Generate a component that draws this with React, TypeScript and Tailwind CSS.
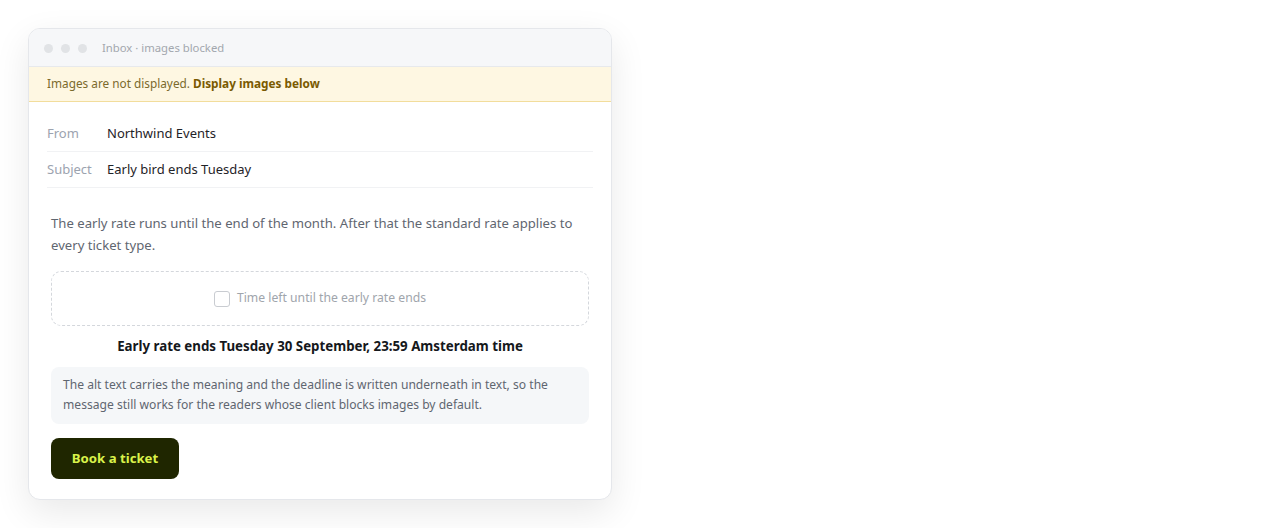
import React from "react";

export default function App() {
  return (
    <div
      className="min-h-[528px] w-[1280px] bg-white pt-[28px] pl-[28px]"
      style={{ fontFamily: '"Noto Sans", "Open Sans", sans-serif' }}
    >
      <div className="w-[584px] overflow-hidden rounded-[12px] border border-[#e5e7eb] bg-white shadow-[0_12px_36px_rgba(0,0,0,0.09)]">
        <div className="flex h-[38px] items-center gap-[8px] border-b border-[#e7e9ec] bg-[#f6f7f9] px-[15px] pt-[1px]">
          <div className="flex gap-[8px]">
            <span className="h-[9px] w-[9px] rounded-full bg-[#e1e3e6]" />
            <span className="h-[9px] w-[9px] rounded-full bg-[#e1e3e6]" />
            <span className="h-[9px] w-[9px] rounded-full bg-[#e1e3e6]" />
          </div>
          <span className="ml-[7px] text-[11.3px] text-[#a3a7ae]">Inbox · images blocked</span>
        </div>
        <div className="flex h-[35px] items-center border-b border-[#f2dd9c] bg-[#fef7e2] px-[18px] text-[11.8px] text-[#7b6a2c]">
          Images are not displayed.&nbsp;<span className="font-bold text-[#7a5a00]">Display images below</span>
        </div>
        <div className="px-[18px] pt-[14px] pb-[20px]">
          <div className="flex h-[36px] items-center border-b border-[#f1f2f4] text-[13px]">
            <span className="w-[60px] text-[#9ca3af]">From</span>
            <span className="text-[#1f2328]">Northwind Events</span>
          </div>
          <div className="flex h-[36px] items-center border-b border-[#f1f2f4] text-[13px]">
            <span className="w-[60px] text-[#9ca3af]">Subject</span>
            <span className="text-[#1f2328]">Early bird ends Tuesday</span>
          </div>
          <div className="px-[4px] pt-[24px]">
            <p className="text-[13.13px] leading-[22px] text-[#5f6670]">
              The early rate runs until the end of the month. After that the standard rate applies to every ticket type.
            </p>
            <div className="mt-[15px] flex h-[55px] items-center justify-center gap-[7px] rounded-[10px] border border-dashed border-[#d4d7dc]">
              <span className="h-[16px] w-[16px] rounded-[3px] border border-[#c9ccd1] bg-white" />
              <span className="text-[12.2px] text-[#a0a5ac]">Time left until the early rate ends</span>
            </div>
            <p className="mt-[11px] text-center text-[13.3px] font-bold text-[#15181c]">
              Early rate ends Tuesday 30 September, 23:59 Amsterdam time
            </p>
            <div className="mt-[10px] rounded-[8px] bg-[#f5f7f9] px-[12px] pt-[8px] pb-[9px] text-[12.1px] leading-[20px] text-[#5f6670]">
              The alt text carries the meaning and the deadline is written underneath in text, so the message still works for the readers whose client blocks images by default.
            </div>
            <button className="mt-[14px] flex h-[41px] w-[128px] items-center justify-center rounded-[8px] bg-[#1f2600] text-[13.2px] font-bold text-[#d9f24a]">
              Book a ticket
            </button>
          </div>
        </div>
      </div>
    </div>
  );
}
